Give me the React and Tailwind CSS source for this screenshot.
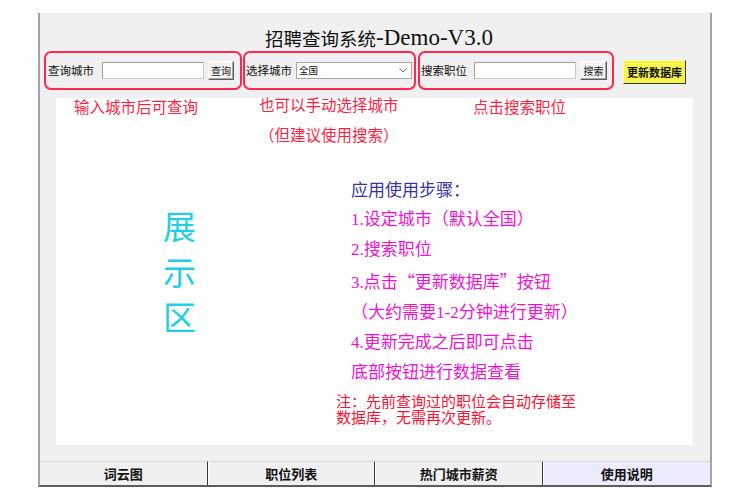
import React from "react";

const cjk = "font-['Noto_Sans_CJK_SC','Noto_Sans',sans-serif]";
const serif = "font-['Liberation_Serif','Noto_Sans_CJK_SC',serif]";

function Input({ w }) {
  return (
    <div
      className={`${w} h-[17px] bg-white border border-[#c8c8c8] border-t-[#a0a0a0] border-l-[#a0a0a0]`}
    />
  );
}

function SmallBtn({ label, w }) {
  return (
    <div
      className={`${w} h-[19px] flex items-center justify-center bg-[#f3f3f3] border border-t-white border-l-white border-b-[#5c5c5c] border-r-[#5c5c5c] shadow-[inset_-1px_-1px_0_#a8a8a8] text-[10px] leading-none text-[#111] ${cjk}`}
    >
      {label}
    </div>
  );
}

export default function App() {
  return (
    <div className="w-[750px] h-[500px] bg-white pt-[13px] pl-[38px] overflow-hidden">
      <div className="w-[674px] h-[474px] bg-[#f0f0f0] border-l-2 border-r-2 border-b-2 border-l-[#a3a3a3] border-r-[#a3a3a3] border-b-[#5c5c5c] flex flex-col">
        {/* Title */}
        <div className="h-[38px] pt-[13px] pl-[8px] flex justify-center items-start leading-[24px] text-[#111]">
          <span className={`${cjk} text-[18.5px]`}>招聘查询系统</span>
          <span className="font-['Liberation_Serif',serif] text-[23px]">-Demo-V3.0</span>
        </div>

        {/* Toolbar */}
        <div className="h-[39px] pl-[4px] flex items-center">
          <div className="w-[198px] h-[39px] border-2 border-[#ff2650] rounded-[7px] flex items-center pl-[2px]">
            <span className={`w-[54px] text-[11.5px] leading-none text-[#111] ${cjk}`}>查询城市</span>
            <Input w="w-[102px]" />
            <div className="ml-[4px]">
              <SmallBtn label="查询" w="w-[26px]" />
            </div>
          </div>
          <div className="ml-[1px] w-[173px] h-[39px] border-2 border-[#ff2650] rounded-[7px] flex items-center">
            <span className={`w-[51px] pl-[1px] text-[11.5px] leading-none text-[#111] ${cjk}`}>选择城市</span>
            <div className="w-[116px] h-[17px] bg-white border border-[#a8a8a8] flex items-center justify-between pl-[2px] pr-[4px]">
              <span className={`text-[9.5px] leading-none text-[#111] ${cjk}`}>全国</span>
              <svg width="8" height="5" viewBox="0 0 8 5">
                <polyline points="0.5,0.5 4,4 7.5,0.5" fill="none" stroke="#707070" strokeWidth="1" />
              </svg>
            </div>
          </div>
          <div className="ml-[2px] w-[196px] h-[39px] border-2 border-[#ff2650] rounded-[7px] flex items-center">
            <span className={`w-[54px] pl-[1px] text-[11.5px] leading-none text-[#111] ${cjk}`}>搜索职位</span>
            <Input w="w-[102px]" />
            <div className="ml-[4px]">
              <SmallBtn label="搜索" w="w-[27px]" />
            </div>
          </div>
          <div
            className={`ml-[9px] mt-[3px] w-[63px] h-[24px] flex items-center justify-center bg-[#f4f44c] border border-t-[#fbfbb0] border-l-[#fbfbb0] border-b-[#3c3c3c] border-r-[#3c3c3c] text-[11px] font-bold leading-none text-[#111] ${cjk}`}
          >
            更新数据库
          </div>
        </div>

        {/* Display area */}
        <div className="ml-[16px] mt-[8px] w-[637px] h-[347px] bg-white flex flex-col">
          {/* annotation row */}
          <div className={`h-[79px] flex items-start text-[#ff1f3f] text-[15.5px] leading-[16px] ${cjk}`}>
            <div className="ml-[18px] w-[185px]">输入城市后可查询</div>
            <div className="w-[214px] -mt-[2px]">
              <div>也可以手动选择城市</div>
              <div className="mt-[14px]">（但建议使用搜索）</div>
            </div>
            <div>点击搜索职位</div>
          </div>

          {/* main row */}
          <div className="flex items-start">
            <div
              className={`ml-[107px] w-[33px] mt-[26px] flex flex-col text-[33px] leading-[45.5px] text-[#1fcfe6] ${cjk}`}
            >
              <span>展</span>
              <span>示</span>
              <span>区</span>
            </div>
            <div className={`ml-[155px] flex flex-col text-[17px] ${serif}`}>
              <div className="leading-[28px] text-[#3333a6]">应用使用步骤：</div>
              <div className="flex flex-col leading-[30.3px] text-[#f014d2]">
                <div>1.设定城市（默认全国）</div>
                <div>2.搜索职位</div>
                <div>
                  3.点击<span className={`${cjk} [font-feature-settings:'fwid']`}>“</span>更新数据库
                  <span className={`${cjk} [font-feature-settings:'fwid']`}>”</span>按钮
                </div>
                <div>（大约需要1-2分钟进行更新）</div>
                <div>4.更新完成之后即可点击</div>
                <div>底部按钮进行数据查看</div>
              </div>
              <p className={`-ml-[15px] mt-[4px] text-[15px] leading-[16px] text-[#ff1030] ${cjk}`}>
                注：先前查询过的职位会自动存储至
                <br />
                数据库，无需再次更新。
              </p>
            </div>
          </div>
        </div>

        {/* Tabs */}
        <div className={`mt-auto h-[24px] grid grid-cols-4 text-[13px] font-bold text-[#111] ${cjk}`}>
          <div className="flex items-center justify-center border-t border-t-[#dcdcdc] border-r border-r-[#3a3a3a] bg-[#f0f0f0]">
            词云图
          </div>
          <div className="flex items-center justify-center border-t border-t-[#dcdcdc] border-l border-l-white border-r border-r-[#3a3a3a] bg-[#f0f0f0]">
            职位列表
          </div>
          <div className="flex items-center justify-center border-t border-t-[#dcdcdc] border-l border-l-white border-r border-r-[#3a3a3a] bg-[#f0f0f0]">
            热门城市薪资
          </div>
          <div className="flex items-center justify-center border-t border-t-[#dcdcdc] border-l border-l-white bg-[#ebebfc]">
            使用说明
          </div>
        </div>
      </div>
    </div>
  );
}
